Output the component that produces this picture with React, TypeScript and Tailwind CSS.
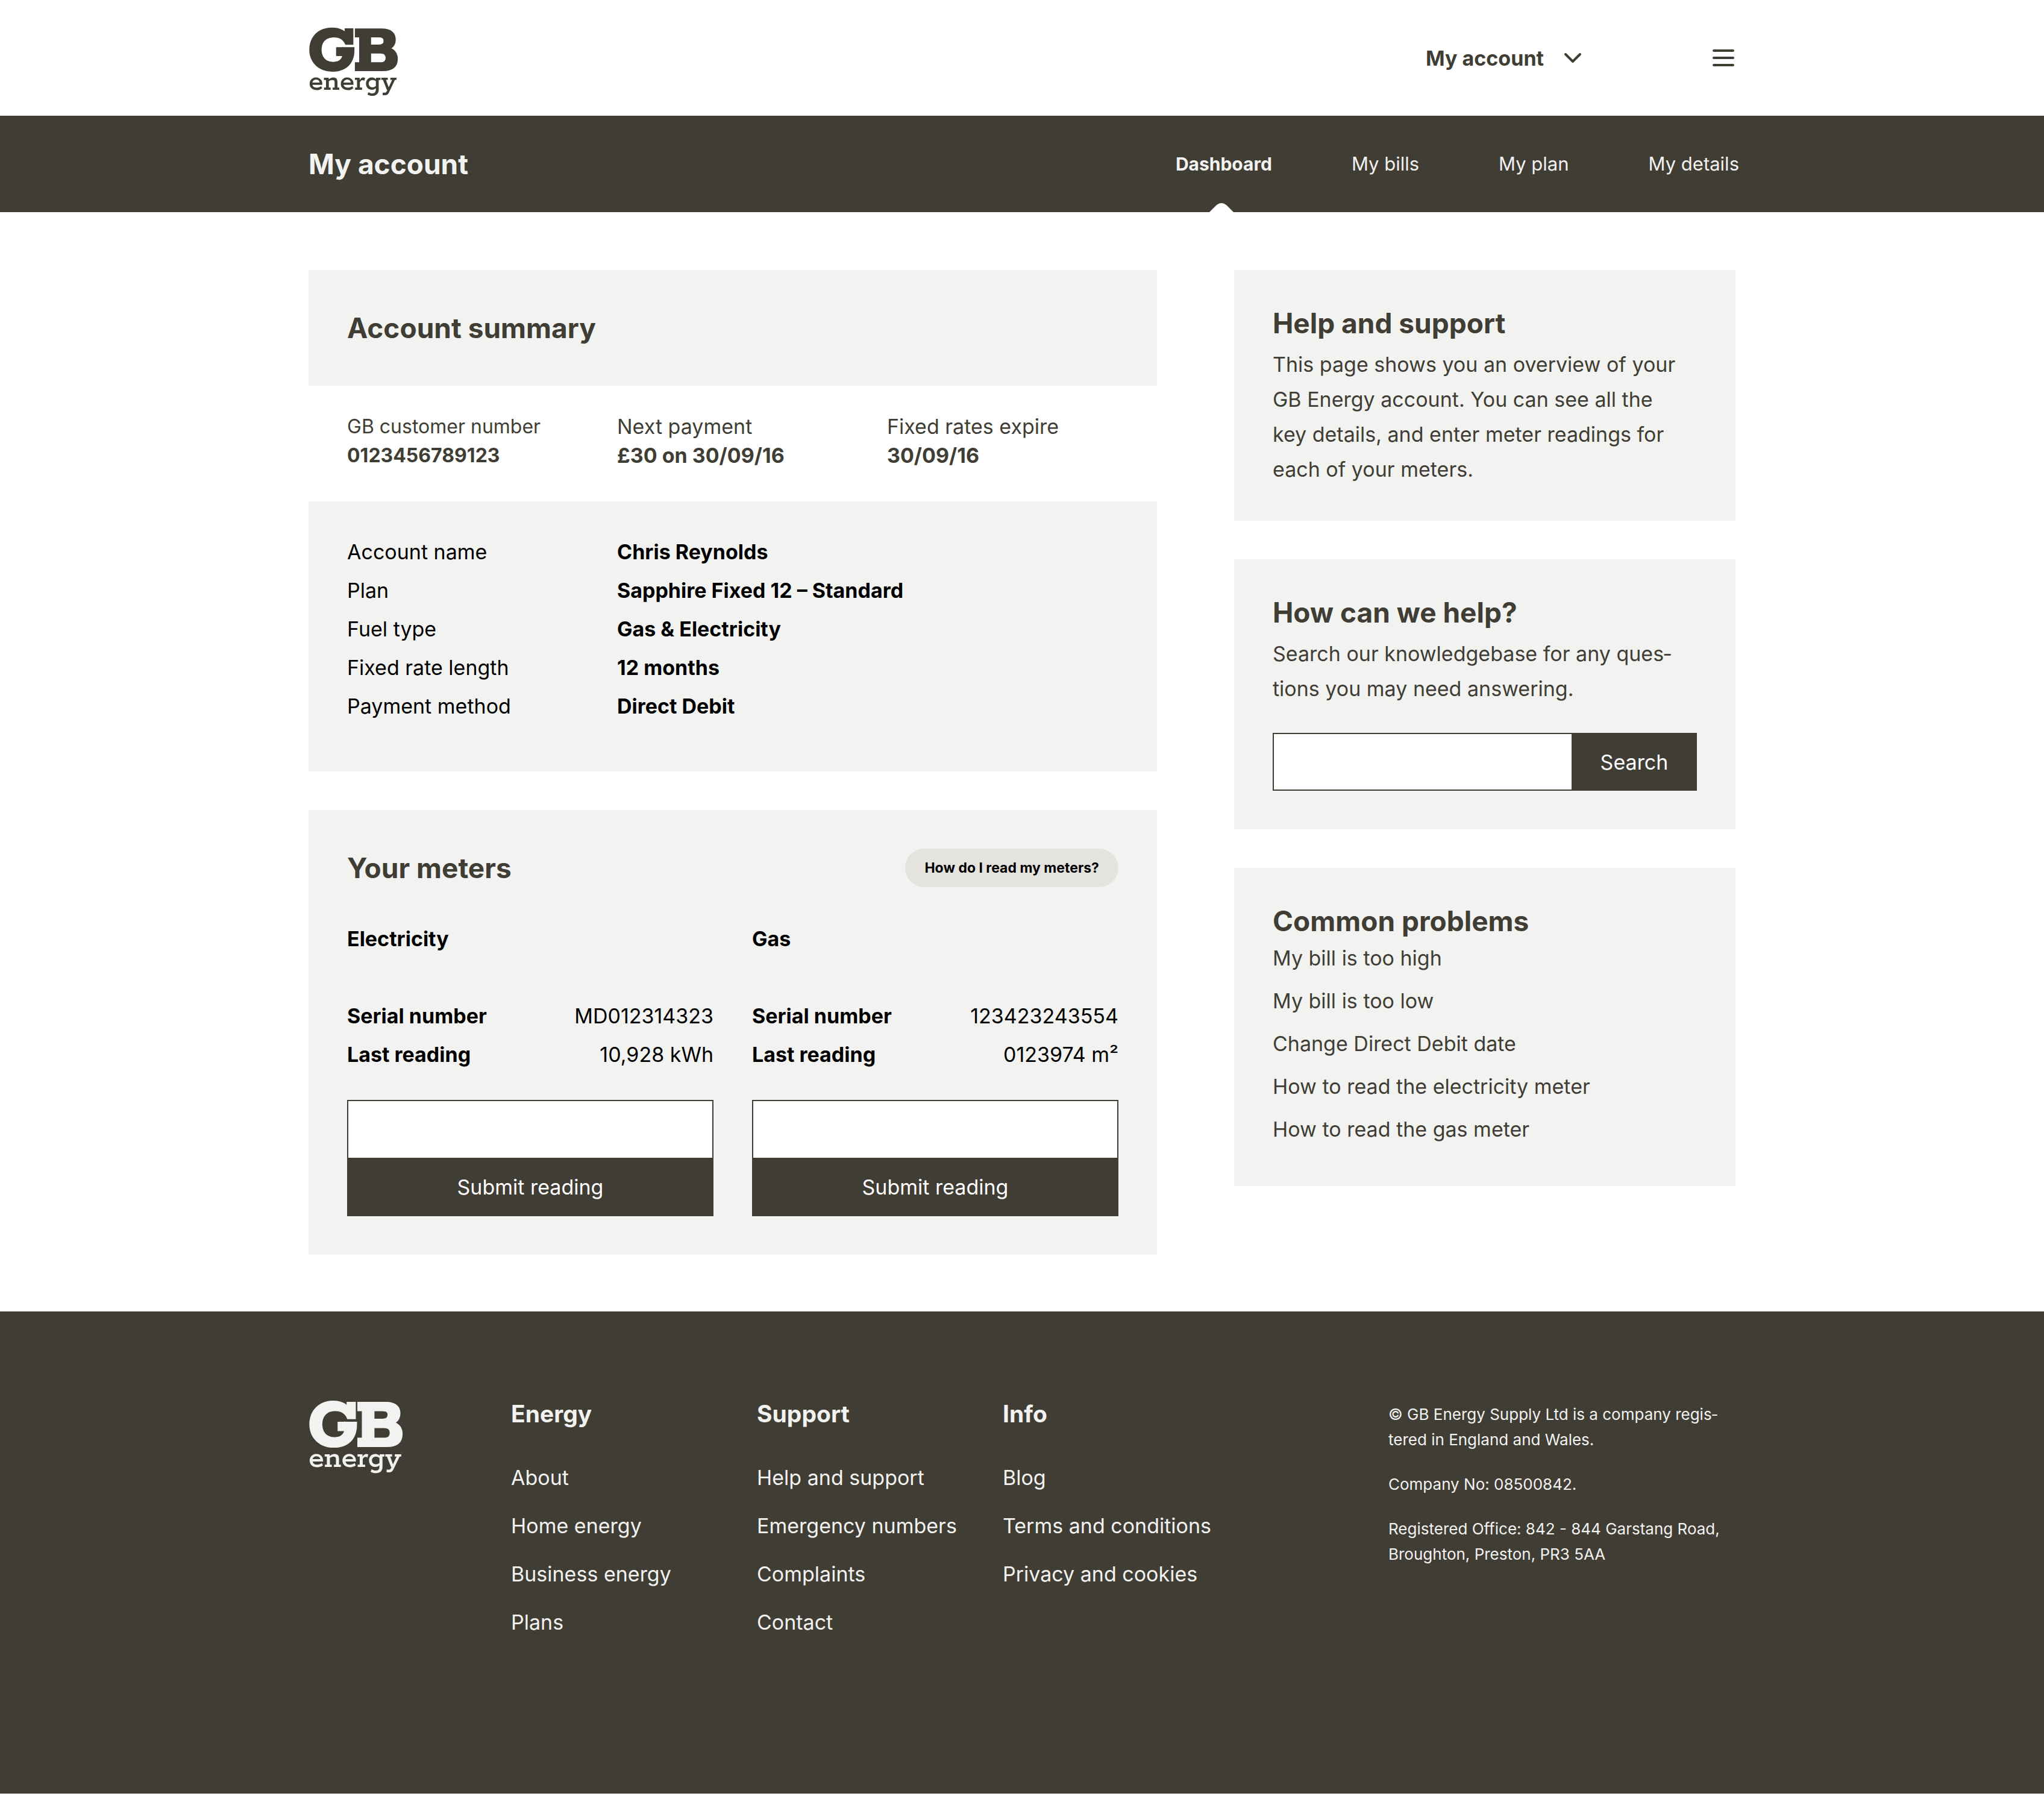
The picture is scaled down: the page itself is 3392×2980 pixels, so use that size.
import type { ReactNode } from "react";

const navLinks = ["Dashboard", "My bills", "My plan", "My details"];

const accountDetails: [string, string][] = [
  ["Account name", "Chris Reynolds"],
  ["Plan", "Sapphire Fixed 12 – Standard"],
  ["Fuel type", "Gas & Electricity"],
  ["Fixed rate length", "12 months"],
  ["Payment method", "Direct Debit"],
];

const meters = [
  { id: "electricity", name: "Electricity", serial: "MD012314323", reading: "10,928 kWh" },
  { id: "gas", name: "Gas", serial: "123423243554", reading: "0123974 m²" },
];

const problems = [
  "My bill is too high",
  "My bill is too low",
  "Change Direct Debit date",
  "How to read the electricity meter",
  "How to read the gas meter",
];

const footerColumns = [
  { title: "Energy", links: ["About", "Home energy", "Business energy", "Plans"] },
  { title: "Support", links: ["Help and support", "Emergency numbers", "Complaints", "Contact"] },
  { title: "Info", links: ["Blog", "Terms and conditions", "Privacy and cookies"] },
];

function Logo({ className }: { className: string }) {
  return (
    <svg viewBox="0 0 148 126" className={`overflow-visible ${className}`} fill="currentColor" role="img" aria-label="GB energy">
      <g fontFamily="Rokkitt, 'DejaVu Serif Condensed', serif">
        <text x="-1 75" y="83" fontSize="115" fontWeight="700" stroke="currentColor" strokeWidth="4">
          GB
        </text>
        <text x="0" y="116" fontSize="50" fontWeight="500">
          energy
        </text>
      </g>
    </svg>
  );
}

function Container({ className, children }: { className: string; children: ReactNode }) {
  return <div className={`mx-auto w-full max-w-[2368px] ${className}`}>{children}</div>;
}

function SideCard({ title, className, children }: { title: string; className: string; children: ReactNode }) {
  return (
    <section className={`bg-[#f2f2f0] px-16 pt-14 ${className}`}>
      <h2 className="text-[46px] leading-[64px] font-bold">{title}</h2>
      {children}
    </section>
  );
}

export default function App() {
  return (
    <div className="bg-white font-['Inter',sans-serif] text-[34px] text-[#403d35]">
      <header>
        <Container className="flex h-48 items-center">
          <a href="#home" className="block">
            <Logo className="w-[148px]" />
          </a>
          <button type="button" className="ml-auto flex items-center gap-8 font-bold">
            My account
            <svg viewBox="0 0 32 20" className="w-8" fill="none" stroke="currentColor" strokeWidth="4" strokeLinecap="round" strokeLinejoin="round">
              <path d="M4 4l12 12L28 4" />
            </svg>
          </button>
          <button type="button" aria-label="Menu" className="mr-0.5 ml-[216px]">
            <svg viewBox="0 0 36 28" className="w-9" fill="none" stroke="currentColor" strokeWidth="4" strokeLinecap="round">
              <path d="M2 2h32M2 14h32M2 26h32" />
            </svg>
          </button>
        </Container>
      </header>

      <div className="bg-[#403d35] text-[#f2f2f0]">
        <Container className="flex h-40 items-stretch">
          <h1 className="self-center text-[46px] leading-[64px] font-bold">My account</h1>
          <nav className="-mr-1.5 ml-auto flex gap-[132px]">
            {navLinks.map((label, i) => (
              <a
                key={label}
                href={`#${label}`}
                className={i === 0 ? "relative flex items-center text-[30px] font-bold" : "flex items-center text-[31px]"}
              >
                {label}
                {i === 0 && (
                  <svg viewBox="0 0 40 15" className="absolute bottom-0 left-1/2 -ml-6 w-10 text-white" fill="currentColor" aria-hidden="true">
                    <path d="M0 15L11 4Q20-4 29 4L40 15Z" />
                  </svg>
                )}
              </a>
            ))}
          </nav>
        </Container>
      </div>

      <main>
        <Container className="grid grid-cols-[minmax(0,1408fr)_minmax(0,832fr)] items-start gap-32 pt-24 pb-[94px]">
          <div className="flex flex-col gap-16">
            <section>
              <div className="bg-[#f2f2f0] p-16">
                <h2 className="text-[46px] leading-[64px] font-bold">Account summary</h2>
              </div>
              <dl className="grid grid-cols-[448px_448px_1fr] px-16 pt-11 pb-[52px] leading-[48px]">
                <div className="text-[32px]">
                  <dt>GB customer number</dt>
                  <dd className="font-bold">0123456789123</dd>
                </div>
                <div>
                  <dt>Next payment</dt>
                  <dd className="font-bold">£30 on 30/09/16</dd>
                </div>
                <div>
                  <dt>Fixed rates expire</dt>
                  <dd className="font-bold">30/09/16</dd>
                </div>
              </dl>
              <dl className="bg-[#f2f2f0] px-16 pt-[52px] pb-[76px] leading-[64px] text-black">
                {accountDetails.map(([label, value]) => (
                  <div key={label} className="grid grid-cols-[448px_1fr]">
                    <dt>{label}</dt>
                    <dd className="font-bold">{value}</dd>
                  </div>
                ))}
              </dl>
            </section>

            <section className="bg-[#f2f2f0] p-16">
              <div className="flex items-center justify-between">
                <h2 className="text-[46px] leading-[64px] font-bold">Your meters</h2>
                <button type="button" className="h-16 rounded-full bg-[#e5e3df] px-8 text-[23px] font-bold text-black">
                  How do I read my meters?
                </button>
              </div>
              <div className="mt-[54px] grid grid-cols-2 gap-16 text-black">
                {meters.map((meter) => (
                  <form key={meter.id} className="flex flex-col leading-[64px]">
                    <h3 className="font-bold">{meter.name}</h3>
                    <dl className="mt-16">
                      <div className="flex justify-between">
                        <dt className="font-bold">Serial number</dt>
                        <dd>{meter.serial}</dd>
                      </div>
                      <div className="flex justify-between">
                        <dt className="font-bold">Last reading</dt>
                        <dd>{meter.reading}</dd>
                      </div>
                    </dl>
                    <input
                      id={`reading-${meter.id}`}
                      type="text"
                      aria-label={`${meter.name} reading`}
                      className="mt-[43px] h-24 w-full border-2 border-b-0 border-[#403d35] bg-white px-6"
                    />
                    <button type="button" className="h-[97px] bg-[#403d35] text-white">
                      Submit reading
                    </button>
                  </form>
                ))}
              </div>
            </section>
          </div>

          <aside className="flex flex-col gap-16">
            <SideCard title="Help and support" className="pb-14">
              <p className="mt-2 pr-6 leading-[58px]">
                This page shows you an overview of your GB Energy account. You can see all the key details, and enter meter readings for
                each of your meters.
              </p>
            </SideCard>

            <SideCard title="How can we help?" className="pb-16">
              <p className="mt-2 pr-6 leading-[58px]">Search our knowledgebase for any ques&shy;tions you may need answering.</p>
              <form className="mt-11 flex h-24">
                <input
                  type="search"
                  aria-label="Search the knowledgebase"
                  className="min-w-0 flex-1 border-2 border-r-0 border-[#403d35] bg-white px-6"
                />
                <button type="button" className="w-52 bg-[#403d35] text-white">
                  Search
                </button>
              </form>
            </SideCard>

            <SideCard title="Common problems" className="pb-16">
              <ul className="flex flex-col gap-[11px] leading-[60px]">
                {problems.map((problem) => (
                  <li key={problem}>
                    <a href="#help">{problem}</a>
                  </li>
                ))}
              </ul>
            </SideCard>
          </aside>
        </Container>
      </main>

      <footer className="bg-[#403d35] text-[#f2f2f0]">
        <Container className="grid grid-cols-[336px_408px_408px_640px_1fr] pt-[136px] pb-[244px]">
          <a href="#home">
            <Logo className="w-[156px]" />
          </a>
          {footerColumns.map((column) => (
            <nav key={column.title} aria-label={column.title} className="pt-2">
              <h2 className="text-[39px] leading-[52px] font-bold">{column.title}</h2>
              <ul className="mt-10 leading-[80px]">
                {column.links.map((link) => (
                  <li key={link}>
                    <a href="#footer">{link}</a>
                  </li>
                ))}
              </ul>
            </nav>
          ))}
          <div className="flex flex-col gap-8 pt-[14px] text-[26px] leading-[42px]">
            <p>© GB Energy Supply Ltd is a company regis&shy;tered in England and Wales.</p>
            <p>Company No: 08500842.</p>
            <p>Registered Office: 842 - 844 Garstang Road, Broughton, Preston, PR3 5AA</p>
          </div>
        </Container>
      </footer>
    </div>
  );
}
